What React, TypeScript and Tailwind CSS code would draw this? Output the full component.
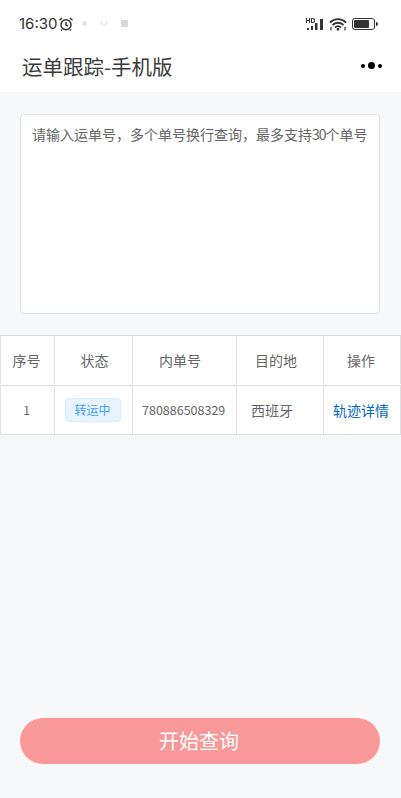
import React from "react";

const CJK = "font-['Noto_Sans_CJK_SC',sans-serif]";

function StatusBar() {
  return (
    <div className="flex h-[46px] items-center justify-between pl-[19px] pr-[23px] pt-[1px]">
      <div className="flex items-center">
        <span className="font-['Inter',sans-serif] text-[15px] leading-none text-[#333]">16:30</span>
        <svg width="16" height="16" viewBox="0 0 16 16" className="ml-[1px]" fill="none" stroke="#333" strokeWidth="1.5">
          <circle cx="8" cy="8.8" r="5" />
          <path d="M8 6v3l2 1M1.500 4.200 4 2M14.500 4.200 12 2M4 13.500l-1 1M12 13.500l1 1" />
        </svg>
        <span className="ml-[8px] h-[5px] w-[5px] rounded-full bg-[#e6e6e6]" />
        <span className="ml-[14px] h-[5px] w-[6px] rounded-b-full border-b border-l border-r border-[#e6e6e6]" />
        <span className="ml-[14px] h-[7px] w-[7px] bg-[#d8d8d8]" />
      </div>
      <div className="flex items-center">
        <svg width="19" height="14" viewBox="0 0 19 14" fill="#333">
          <rect x="1" y="11" width="2" height="2" />
          <rect x="5" y="9" width="2" height="4" />
          <rect x="9" y="6" width="2.500" height="7" />
          <rect x="14" y="2" width="3" height="11" />
          <path d="M0 1h1v2h2V1h1v5H3V4H1v2H0zM5 1h2l2 1v3L7 6H5zm1 1v3h1l1-1V3L7 2z" />
        </svg>
        <svg width="18" height="14" viewBox="0 0 18 14" fill="none" stroke="#333" strokeWidth="1.8" className="ml-[4px]">
          <path d="M1 5.500c4.500-4.500 11.500-4.500 16 0M3.500 8c3-3 8-3 11 0M6 10.500c1.700-1.500 4.300-1.500 6 0" />
          <path d="M9 11v2.500" strokeWidth="2.500" />
          <path d="M2 10v3.500M16 10v3.500" strokeWidth="1.200" />
        </svg>
        <div className="ml-[5px] flex items-center">
          <div className="flex h-[12px] w-[23px] items-center rounded-[3px] border border-[#333] p-[1px]">
            <div className="h-full w-[15px] rounded-[1px] bg-[#333]" />
          </div>
          <div className="ml-[1px] h-[4px] w-[2px] rounded-r-sm bg-[#333]" />
        </div>
      </div>
    </div>
  );
}

function Header() {
  return (
    <div className="flex h-[46px] items-center justify-between pb-[6px] pl-[22px] pr-[19px]">
      <span className="text-[20.5px] leading-none text-[#3a3a3a]">运单跟踪-手机版</span>
      <div className="mb-[1px] flex items-center gap-[3px]">
        <span className="h-[4px] w-[4px] rounded-full bg-black" />
        <span className="h-[7px] w-[7px] rounded-full bg-black" />
        <span className="h-[4px] w-[4px] rounded-full bg-black" />
      </div>
    </div>
  );
}

const cols = "grid grid-cols-[55px_78px_104px_87px_77px]";
const cell = "flex items-center border-r border-[#e0e0e0]";

function ResultTable() {
  return (
    <div className="mt-[21px] h-[100px] w-[401px] border-y border-[#e0e0e0] bg-white text-[14px] text-[#666]">
      <div className={`${cols} h-[50px] border-b border-[#e0e0e0] pb-[1px]`}>
        <div className={`${cell} justify-center border-l pr-[2px]`}>序号</div>
        <div className={`${cell} justify-center pl-[2px]`}>状态</div>
        <div className={`${cell} pl-[26px]`}>内单号</div>
        <div className={`${cell} pl-[18px]`}>目的地</div>
        <div className={`${cell} justify-center pr-[2px]`}>操作</div>
      </div>
      <div className={`${cols} h-[48px]`}>
        <div className={`${cell} justify-center border-l pr-[2px] text-[12px]`}>1</div>
        <div className={`${cell} justify-center pr-[2px]`}>
          <span className="flex h-[24px] w-[56px] items-center justify-center rounded-[4px] border border-[#d9ecff] bg-[#e8f4ff] text-[12px] text-[#409eff]">
            转运中
          </span>
        </div>
        <div className={`${cell} pl-[9px] text-[12.5px]`}>780886508329</div>
        <div className={`${cell} pl-[14px]`}>西班牙</div>
        <div className={`${cell} justify-center pr-[2px] text-[#0066cc]`}>轨迹详情</div>
      </div>
    </div>
  );
}

export default function App() {
  return (
    <div className={`flex h-[798px] w-[401px] flex-col overflow-hidden bg-[#f7f8fa] ${CJK}`}>
      <div className="bg-white">
        <StatusBar />
        <Header />
      </div>
      <div className="ml-[20px] mt-[22px] h-[200px] w-[360px] rounded-[4px] border border-[#dfe1e6] bg-white px-[11px] pt-[9px] text-[14px] leading-[20px] whitespace-nowrap text-[#666]">
        请输入运单号，多个单号换行查询，最多支持<span className="tracking-[-1px]">30</span>个单号
      </div>
      <ResultTable />
      <button className="mb-[34px] ml-[20px] mt-auto h-[46px] w-[360px] rounded-full bg-[#f89898] pr-[2px] text-[20px] text-white">
        开始查询
      </button>
    </div>
  );
}
